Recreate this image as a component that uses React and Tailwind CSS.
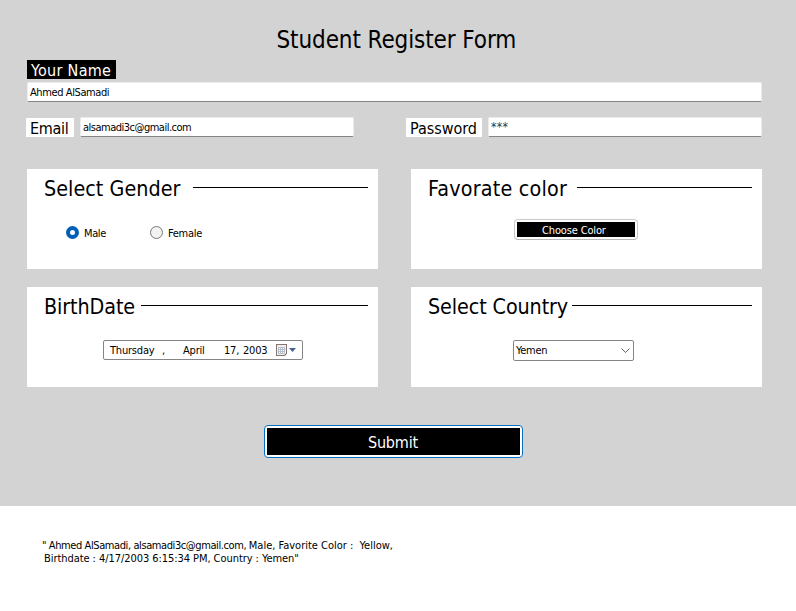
import React from "react";

function Field({ className, children }) {
  return (
    <div
      className={`h-[20px] shrink-0 rounded-[2px] border border-[#ececec] border-b-[#858585] bg-white pl-[2px] text-[11px] whitespace-pre ${className}`}
    >
      {children}
    </div>
  );
}

function Card({ title, titleClass, children }) {
  return (
    <section className="h-[100px] w-[351px] bg-white">
      <div className="flex h-[38px] items-start pr-[10px] pl-[17px]">
        <h2 className={`shrink-0 text-[21.33px] leading-[40px] whitespace-pre ${titleClass}`}>{title}</h2>
        <div className="mt-[18px] h-px grow bg-black" />
      </div>
      {children}
    </section>
  );
}

function CalendarIcon() {
  return (
    <svg width="12" height="13" viewBox="0 0 12 13" shapeRendering="crispEdges">
      <path d="M1 12h8l2-2V2h-1v7l-2 2H1z" fill="#cfcfcf" />
      <path d="M0 0h11v9l-2 3H0z" fill="#85746f" />
      <path d="M1 1h9v8H8v2H1z" fill="#eef0f2" />
      <path d="M2 3h7v6H8v1H2z" fill="#b4bfcb" />
      <path d="M3 4h1v1H3zM5 4h1v1H5zM7 4h1v1H7zM3 6h1v1H3zM5 6h1v1H5zM7 6h1v1H7zM3 8h1v1H3zM5 8h1v1H5zM7 8h1v1H7z" fill="#fff" />
      <path d="M8 9h2l-2 2z" fill="#d9d5d3" />
    </svg>
  );
}

export default function App() {
  return (
    <div className="h-[611px] w-[796px] overflow-hidden bg-white font-['DejaVu_Sans_Condensed','DejaVu_Sans',sans-serif] [font-stretch:condensed] text-black">
      <main className="h-[506px] bg-[#d3d3d3] pt-[24px] pl-[27px]">
        <h1 className="ml-[249.5px] h-[36px] text-[24px] leading-[32px] tracking-[-0.1px] whitespace-pre">Student Register Form</h1>
        <div className="h-[19px] w-[89px] bg-black pl-[4px] text-[16px] leading-[21px] tracking-[0.3px] whitespace-pre text-white">Your Name</div>
        <Field className="mt-[3px] w-[735px] leading-[20px] tracking-[-0.4px]">Ahmed AlSamadi</Field>
        <div className="-ml-px mt-[15px] flex h-[20px]">
          <div className="mt-px h-[19px] w-[48px] bg-white pl-[4px] text-[16px] leading-[21px] tracking-[-0.3px]">Email</div>
          <Field className="ml-[6px] w-[274px] leading-[20px] tracking-[-0.5px]">alsamadi3c@gmail.com</Field>
          <div className="mt-px ml-[52px] h-[19px] w-[76px] bg-white pl-[4px] text-[16px] leading-[21px] tracking-[-0.02px]">Password</div>
          <Field className="ml-[6px] w-[274px] leading-[18px] tracking-[0.4px] text-[#123c5c] text-[12px]">***</Field>
        </div>

        <div className="mt-[32px] grid w-[735px] grid-cols-[351px_351px] gap-x-[33px] gap-y-[18px]">
          <Card title="Select Gender" titleClass="w-[149px] tracking-[0.03px]">
            <div className="mt-[19px] flex h-[13px] pl-[39px] text-[11px] leading-[16px]">
              <div className="h-[13px] w-[13px] rounded-full border-4 border-[#0060b8] bg-white" />
              <span className="ml-[5px] w-[66px] tracking-[-0.4px]">Male</span>
              <div className="h-[13px] w-[13px] rounded-full border border-[#777777] bg-[#f2f2f2]" />
              <span className="ml-[5px] tracking-[-0.3px]">Female</span>
            </div>
          </Card>

          <Card title="Favorate color" titleClass="w-[149px] tracking-[0.2px]">
            <div className="mt-[12px] ml-[103px] h-[21px] w-[124px] rounded-[4px] border border-[#c9c9c9] border-b-[#b8b8b8] bg-white p-[2px]">
              <div className="h-[15px] bg-black pl-[25px] text-[11px] leading-[18px] tracking-[-0.15px] whitespace-pre text-white">Choose Color</div>
            </div>
          </Card>

          <Card title="BirthDate" titleClass="w-[97px] tracking-[-0.1px]">
            <div className="mt-[15px] ml-[76px] flex h-[20px] w-[200px] rounded-[2px] border border-[#858585] bg-white pl-[6px] text-[11px] leading-[20px] tracking-[-0.2px] whitespace-pre">
              <span className="w-[52px]">Thursday</span>
              <span className="w-[21px]">,</span>
              <span className="w-[41px]">April</span>
              <span className="w-[19px]">17,</span>
              <span className="w-[33px]">2003</span>
              <span className="pt-[3px]"><CalendarIcon /></span>
              <svg className="mt-[7px] ml-px" width="7" height="4" viewBox="0 0 7 4">
                <path d="M0 0h7L3.500 4z" fill="#46618f" />
              </svg>
            </div>
          </Card>

          <Card title="Select Country" titleClass="w-[144px] tracking-[-0.1px]">
            <div className="mt-[15px] ml-[102px] flex h-[21px] w-[121px] rounded-[2px] border border-[#858585] bg-white pl-[2px] text-[11px] leading-[19px]">
              <span className="w-[105px] tracking-[-0.3px]">Yemen</span>
              <svg className="mt-[7px]" width="9" height="5" viewBox="0 0 9 5">
                <path d="M.5.5l4 4 4-4" fill="none" stroke="#606060" />
              </svg>
            </div>
          </Card>
        </div>

        <div className="mt-[38px] ml-[237px] h-[33px] w-[259px] rounded-[4px] border border-[#0b6fc0] bg-white p-[2px]">
          <div className="h-[27px] bg-black pl-[101px] text-[16px] leading-[29px] tracking-[-0.2px] text-white">Submit</div>
        </div>
      </main>
      <footer className="pt-[33px] pl-[42px] text-[11px] leading-[13px] whitespace-pre">
        <p>
          <span className="tracking-[-0.41px]">" Ahmed AlSamadi, alsamadi3c@gmail.com, </span>
          <span className="tracking-[-0.01px]">Male, Favorite Color :  Yellow,</span>
        </p>
        <p className="pl-[2px] tracking-[-0.06px]">Birthdate : 4/17/2003 6:15:34 PM, Country : Yemen"</p>
      </footer>
    </div>
  );
}
